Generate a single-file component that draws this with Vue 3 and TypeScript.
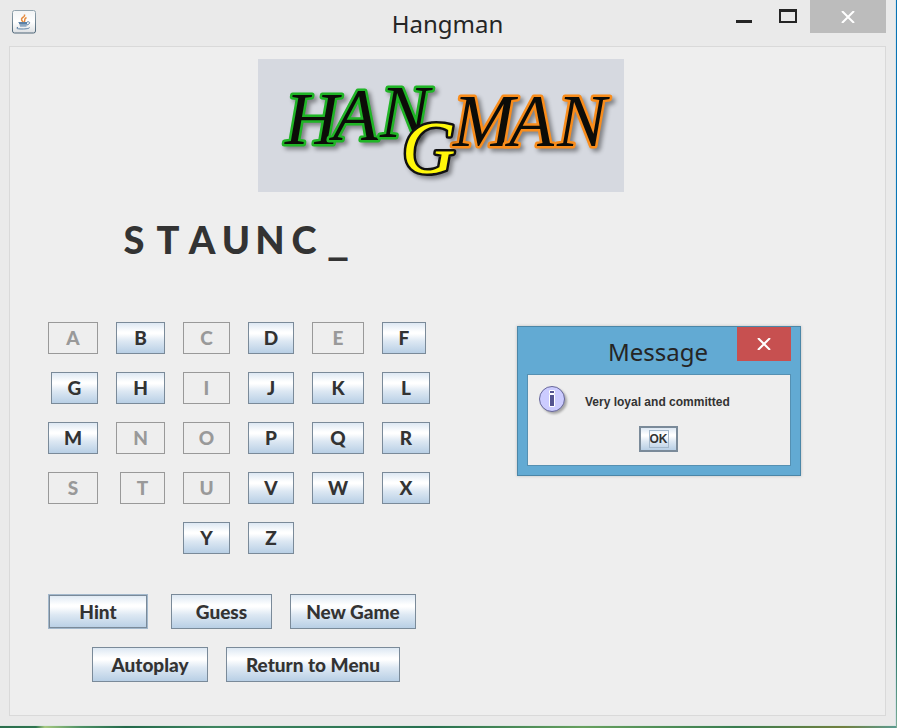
<script setup lang="ts">
import { ref } from 'vue'

const answer = 'STAUNCH'
const columns = [
  ['A', 'B', 'C', 'D', 'E', 'F'],
  ['G', 'H', 'I', 'J', 'K', 'L'],
  ['M', 'N', 'O', 'P', 'Q', 'R'],
  ['S', 'T', 'U', 'V', 'W', 'X'],
  ['Y', 'Z'],
]
const letters = columns.flat()
const used = ref<string[]>(['A', 'C', 'E', 'I', 'N', 'O', 'S', 'T', 'U'])
const revealed = ref<string[]>(['S', 'T', 'A', 'U', 'N', 'C'])
const showMessage = ref(true)

function guess(letter: string): void {
  used.value.push(letter)
  if (answer.includes(letter)) revealed.value.push(letter)
}

function shown(letter: string): string {
  return revealed.value.includes(letter) ? letter : '_'
}
</script>

<template>
  <div class="desktop">
    <div class="window">
      <header class="titlebar">
        <svg class="java" viewBox="0 0 24 24" aria-hidden="true">
          <defs>
            <linearGradient id="tile" x1="0" y1="0" x2="0" y2="1">
              <stop offset="0" stop-color="#f2f4f5" />
              <stop offset="0.5" stop-color="#ffffff" />
              <stop offset="1" stop-color="#dcdfe2" />
            </linearGradient>
            <linearGradient id="tileEdge" x1="0" y1="0" x2="0" y2="1">
              <stop offset="0" stop-color="#93a4ae" />
              <stop offset="1" stop-color="#4d6577" />
            </linearGradient>
          </defs>
          <rect x="0.5" y="0.5" width="23" height="22.5" rx="2" fill="url(#tile)" stroke="url(#tileEdge)" />
          <path d="M11 12C8 9 10 8 12 6.500C13 5.700 12.500 5 12.500 4.500M12 12C14 10 11 9.500 14.500 7.500" fill="none" stroke="#e58a3c" stroke-width="1.500" />
          <path d="M6.500 12.500H15M7 13.500H15M8 16H14.500M7.500 14.800H15M15 12C18.500 11 18.500 14 15 15" fill="none" stroke="#5b80a5" />
          <path d="M6 17.200C3 18.500 6 19 10 19C14 19 17.500 18.500 17.500 17.500" fill="none" stroke="#5b80a5" />
        </svg>
        <h1 class="title">Hangman</h1>
        <div class="controls">
          <button class="control" type="button" aria-label="Minimize">
            <svg viewBox="0 0 44 33" width="44" height="33"><path d="M12 20H28V23H12Z" fill="#252525" /></svg>
          </button>
          <button class="control" type="button" aria-label="Maximize">
            <svg viewBox="0 0 42 33" width="42" height="33"><path fill-rule="evenodd" d="M11 9H29V23H11ZM13 12V21H27V12Z" fill="#252525" /></svg>
          </button>
          <button class="control close" type="button" aria-label="Close">
            <svg viewBox="0 0 14 12" width="14" height="12"><path d="M1 0L13 12M13 0L1 12" stroke="#fff" stroke-width="2" /></svg>
          </button>
        </div>
      </header>

      <main class="panel">
        <div class="banner">
          <svg class="logo" viewBox="0 0 366 133" role="img" aria-label="Hangman">
            <g class="logo-shadow">
              <text class="logo-text hang" x="27 75 122" y="85 81 78">HAN</text>
              <text class="logo-text man" x="195 251 299" y="87">MAN</text>
            </g>
            <g class="logo-shadow">
              <text class="logo-text drop" x="144" y="114">G</text>
            </g>
          </svg>
        </div>

        <p class="word">
          <span
            v-for="(letter, i) in answer"
            :key="i"
            class="slot"
            :class="{ blank: !revealed.includes(letter) }"
          >{{ shown(letter) }}</span>
        </p>

        <section class="keys">
          <button
            v-for="letter in letters"
            :key="letter"
            type="button"
            class="metal key"
            :class="`key-${letter.toLowerCase()}`"
            :disabled="used.includes(letter)"
            @click="guess(letter)"
          >{{ letter }}</button>
        </section>

        <nav class="actions">
          <div class="action-row">
            <button type="button" class="metal action hint" @click="showMessage = true">Hint</button>
            <button type="button" class="metal action guess">Guess</button>
            <button type="button" class="metal action new-game">New Game</button>
          </div>
          <div class="action-row">
            <button type="button" class="metal action autoplay">Autoplay</button>
            <button type="button" class="metal action menu">Return to Menu</button>
          </div>
        </nav>
      </main>
    </div>

    <section v-if="showMessage" class="dialog" role="dialog" aria-labelledby="dialog-title">
      <header class="dialog-bar">
        <h2 id="dialog-title" class="title">Message</h2>
        <button class="dialog-close" type="button" aria-label="Close" @click="showMessage = false">
          <svg viewBox="0 0 14 12" width="14" height="12"><path d="M1 0L13 12M13 0L1 12" stroke="#fff" stroke-width="2" /></svg>
        </button>
      </header>
      <div class="dialog-body">
        <div class="message">
          <svg class="info" viewBox="0 0 32 32" aria-hidden="true">
            <circle cx="14" cy="14" r="12.500" fill="#ccccff" stroke="#666699" />
            <path d="M11.500 5.500H16.500V8.500H11.500ZM11.500 9.500H16.500V21.500H11.500Z" fill="#555590" stroke="#fff" />
          </svg>
          <p class="message-text">Very loyal and committed</p>
        </div>
        <button class="metal ok" type="button" @click="showMessage = false"><span class="ok-label">OK</span></button>
      </div>
    </section>
  </div>
</template>

<style>
body {
  margin: 0;
}
</style>

<style scoped>
.desktop {
  position: relative;
  box-sizing: border-box;
  min-height: 100vh;
  padding: 0 1px 2px 0;
  display: flex;
  background:
    linear-gradient(#0873b5, #0a79b8 60%, #0b6157 85%, #7fae98) right / 1px 100% no-repeat,
    linear-gradient(90deg, #2b6e4d 0, #2f7550 4%, #a5c880 5%, #4d9065 9%, #24694b 14%, #3f8560 24%, #277050 48%, #67a05e 65%, #3a7d50 82%, #72803f 94%, #5c9b91);
  color: #333;
}

.window {
  flex: 1;
  display: flex;
  flex-direction: column;
  padding: 0 9px 9px;
  background: #eaeaea;
  border-right: 1px solid #d6e2e7;
  border-bottom: 1px solid #dfe8e3;
  box-sizing: border-box;
}

.titlebar {
  display: grid;
  grid-template-columns: 1fr auto 1fr;
  height: 46px;
}

.java {
  width: 24px;
  height: 24px;
  margin: 10px 0 0 3px;
}

.title {
  margin: 0;
  font: 400 24px/32px "Noto Sans", "Open Sans", sans-serif;
  color: #252525;
}

.titlebar .title {
  padding-top: 8px;
}

.controls {
  display: flex;
  justify-content: flex-end;
  align-items: flex-start;
}

.control {
  display: flex;
  align-items: center;
  justify-content: center;
  height: 33px;
  padding: 0;
  border: 0;
  background: none;
}

.close {
  width: 76px;
  background: #bcbcbc;
}

.panel {
  flex: 1;
  padding: 12px 0 32px;
  background: #eee;
  border: 1px solid #d9d9d9;
}

.banner {
  display: flex;
  justify-content: center;
  padding-right: 13px;
}

.logo {
  width: 366px;
  height: 133px;
  background: #d6d9e0;
}

.logo-shadow {
  filter: drop-shadow(3px 3px 2px rgba(0, 0, 0, 0.4));
}

.logo-text {
  font-family: "Liberation Serif", serif;
  font-size: 74px;
  font-style: italic;
  fill: #0c0c08;
  stroke-width: 5px;
  stroke-linejoin: round;
  paint-order: stroke;
}

.hang {
  stroke: #20b526;
}

.man {
  stroke: #f98d1c;
}

.drop {
  fill: #fff80a;
  stroke: #111;
}

.word {
  display: flex;
  margin: 25px 0 0 107px;
  font: 900 38px/44px Lato, "Open Sans", sans-serif;
}

.slot {
  width: 34px;
  text-align: center;
}

.blank {
  font-family: "DejaVu Sans", sans-serif;
}

.metal {
  box-sizing: border-box;
  padding: 0;
  border: 1px solid #7a8a99;
  background: linear-gradient(#dde8f3, #fff 30%, #fff 36%, #dde8f3 60%, #b8cfe5);
  color: #333;
  text-align: center;
}

.metal:disabled {
  border-color: #999;
  background: #eee;
  color: #999;
}

.keys {
  display: grid;
  grid-template-columns: 50px 49px 47px 46px 52px 48px;
  grid-auto-rows: 32px;
  gap: 18px;
  margin: 61px 0 0 38px;
}

.key {
  font: 900 19px/28px Lato, "Open Sans", sans-serif;
}

.key-f {
  margin-right: 4px;
}

.key-g {
  margin-left: 3px;
}

.key-t {
  margin-left: 4px;
}

.key-y {
  grid-column: 3;
}

.actions {
  display: flex;
  flex-direction: column;
  gap: 18px;
  margin: 40px 0 0 38px;
}

.action-row {
  display: flex;
  gap: 18px;
}

.action-row + .action-row {
  padding-left: 44px;
}

.action {
  height: 35px;
  font: 900 19px/30px Lato, "Open Sans", sans-serif;
}

.hint {
  width: 100px;
  margin-right: 5px;
  border-color: #a3b8cc;
  box-shadow: inset 0 0 0 1px #7a8a99;
}

.guess {
  width: 101px;
}

.new-game {
  width: 126px;
}

.autoplay {
  width: 116px;
}

.menu {
  width: 174px;
}

.dialog {
  position: absolute;
  left: 517px;
  top: 326px;
  box-sizing: border-box;
  width: 284px;
  padding: 0 9px 9px;
  border: 1px solid #4b86a7;
  background: #62aad3;
  box-shadow: 0 0 3px rgba(0, 0, 0, 0.2);
}

.dialog-bar {
  display: flex;
  justify-content: flex-end;
  align-items: flex-start;
  height: 47px;
}

.dialog-bar .title {
  padding: 9px 29px 0 0;
}

.dialog-close {
  display: flex;
  align-items: center;
  justify-content: center;
  width: 54px;
  height: 34px;
  padding: 0;
  border: 0;
  background: #c75050;
}

.dialog-body {
  display: flex;
  flex-direction: column;
  align-items: center;
  padding: 10px 11px 13px 10px;
  border: 1px solid #5590b2;
  background: #eee;
}

.message {
  display: flex;
  align-self: stretch;
  gap: 15px;
}

.info {
  width: 32px;
  height: 32px;
  filter: drop-shadow(2px 2px 1px rgba(0, 0, 0, 0.3));
}

.message-text {
  margin: 0;
  font: 700 12px/34px "Liberation Sans", Arial, sans-serif;
}

.ok {
  display: flex;
  align-items: center;
  justify-content: center;
  width: 39px;
  height: 26px;
  margin-top: 7px;
  border-width: 2px;
  font: 700 12px/16px "Liberation Sans", Arial, sans-serif;
}

.ok-label {
  outline: 1px solid #a3b8cc;
}
</style>
